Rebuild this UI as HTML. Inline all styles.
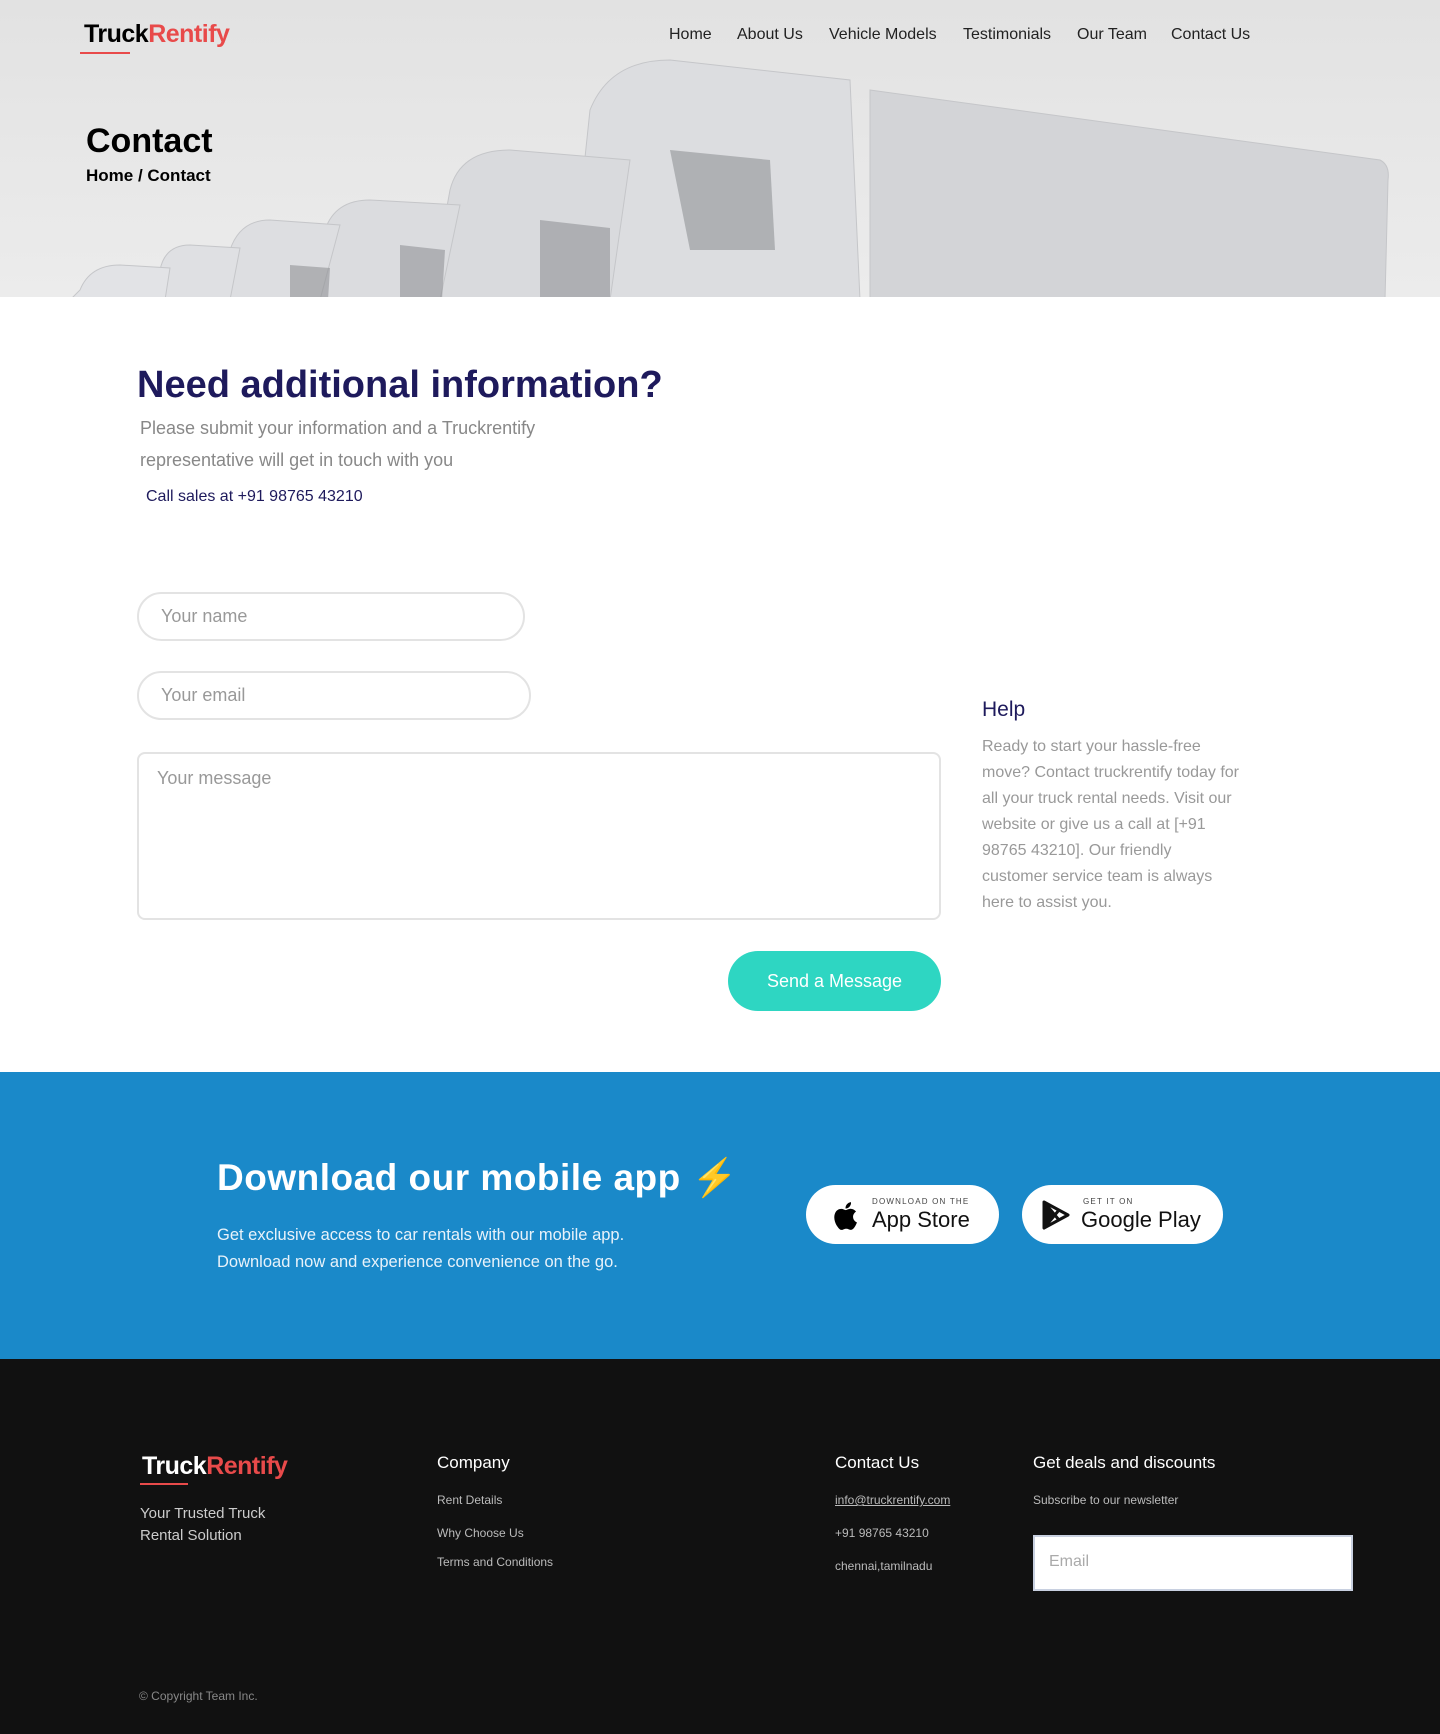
<!DOCTYPE html>
<html><head><meta charset="utf-8"><style>
*{margin:0;padding:0;box-sizing:border-box}
body{width:1440px;height:1734px;position:relative;font-family:"Liberation Sans",sans-serif;background:#fff;overflow:hidden}
.a{position:absolute}
.hero{left:0;top:0;width:1440px;height:297px;background:linear-gradient(180deg,#e2e2e2,#ececec);overflow:hidden}
.nav{top:26px;font-size:16px;color:#222}
.logo{font-weight:bold;font-size:25px;letter-spacing:-0.5px}
.logo span{color:#e84a4a}
.inp{border:2px solid #e3e3e3;border-radius:26px;color:#999;font-size:18px;padding-left:22px;display:flex;align-items:center}
.fl{font-size:12px;color:#bbb}
</style></head><body>
<div class="a hero">
<svg class="a" style="left:70px;top:50px" width="1330" height="250" viewBox="0 0 1330 250">
<g stroke="#c5c6c9">
<path d="M800 40 L1310 110 Q1320 115 1318 130 L1315 250 L800 250 Z" fill="#d3d4d7"/>
<path d="M520 60 Q540 10 600 10 L780 30 L790 250 L500 250 Z" fill="#dcdde0"/>
<path d="M380 140 Q390 100 440 100 L560 110 L540 250 L360 250 Z" fill="#d9dadd"/>
<path d="M255 180 Q265 150 300 150 L390 155 L370 250 L240 250 Z" fill="#dbdcdf"/>
<path d="M160 200 Q170 170 200 170 L270 175 L250 250 L150 250 Z" fill="#dddee1"/>
<path d="M90 220 Q95 195 120 195 L170 198 L160 250 L80 250 Z" fill="#dfe0e3"/>
<path d="M10 240 Q20 215 50 215 L100 218 L95 250 L0 250 Z" fill="#e2e3e6"/>
</g>
<g fill="#8b8c90" opacity=".55">
<path d="M600 100 L700 110 L705 200 L620 200 Z"/><path d="M470 170 L540 178 L540 250 L470 250 Z"/>
<path d="M330 195 L375 200 L372 250 L330 250 Z"/><path d="M220 215 L260 218 L258 250 L220 250 Z"/>
</g></svg>
<div class="a logo" style="left:84px;top:20px">Truck<span>Rentify</span></div>
<div class="a" style="left:80px;top:52px;width:50px;height:2px;background:#e84a4a"></div>
<div class="a nav" style="left:669px">Home</div>
<div class="a nav" style="left:737px">About Us</div>
<div class="a nav" style="left:829px">Vehicle Models</div>
<div class="a nav" style="left:963px">Testimonials</div>
<div class="a nav" style="left:1077px">Our Team</div>
<div class="a nav" style="left:1171px">Contact Us</div>
<div class="a" style="left:86px;top:122px;font-size:34px;font-weight:bold;color:#000">Contact</div>
<div class="a" style="left:86px;top:166px;font-size:17px;font-weight:bold;color:#000">Home / Contact</div>
</div>
<div class="a" style="left:137px;top:364px;font-size:38px;font-weight:bold;color:#1e1a5c">Need additional information?</div>
<div class="a" style="left:140px;top:412px;font-size:18px;line-height:32px;color:#888">Please submit your information and a Truckrentify<br>representative will get in touch with you</div>
<div class="a" style="left:146px;top:488px;font-size:16px;color:#1e1a5c">Call sales at +91 98765 43210</div>
<div class="a inp" style="left:137px;top:592px;width:388px;height:49px">Your name</div>
<div class="a inp" style="left:137px;top:671px;width:394px;height:49px">Your email</div>
<div class="a inp" style="left:137px;top:752px;width:804px;height:168px;border-radius:8px;align-items:flex-start;padding-top:14px;padding-left:18px">Your message</div>
<div class="a" style="left:728px;top:951px;width:213px;height:60px;border-radius:30px;background:#2ed6c2;color:#fff;font-size:18px;display:flex;align-items:center;justify-content:center">Send a Message</div>
<div class="a" style="left:982px;top:698px;font-size:21px;color:#1e1a5c">Help</div>
<div class="a" style="left:982px;top:734px;width:258px;font-size:16px;line-height:26px;color:#999">Ready to start your hassle-free move? Contact truckrentify today for all your truck rental needs. Visit our website or give us a call at [+91 98765 43210]. Our friendly customer service team is always here to assist you.</div>
<div class="a" style="left:0;top:1072px;width:1440px;height:287px;background:#1a89c9"></div>
<div class="a" style="left:217px;top:1157px;font-size:37px;font-weight:bold;color:#fff;letter-spacing:0.5px">Download our mobile app <span style="color:#f5c518">⚡</span></div>
<div class="a" style="left:217px;top:1222px;font-size:16.5px;line-height:27px;color:#e8f2fa">Get exclusive access to car rentals with our mobile app.<br>Download now and experience convenience on the go.</div>
<div class="a" style="left:806px;top:1185px;width:193px;height:59px;border-radius:30px;background:#fff">
<svg class="a" style="left:26px;top:16px" width="26" height="30" viewBox="0 0 24 28"><path d="M19.5 14.8c0-3.3 2.7-4.8 2.8-4.9-1.5-2.2-3.9-2.5-4.7-2.6-2-.2-3.9 1.2-4.9 1.2s-2.6-1.2-4.3-1.1C6.2 7.4 4.2 8.7 3.1 10.6c-2.3 4-.6 9.9 1.7 13.1 1.1 1.6 2.4 3.4 4.1 3.3 1.6-.1 2.3-1.1 4.3-1.1s2.5 1.1 4.3 1 2.9-1.6 3.9-3.2c1.2-1.8 1.7-3.6 1.8-3.7-.1 0-3.6-1.4-3.7-5.2zM16.3 5.2c.9-1.1 1.5-2.6 1.3-4.2-1.3.1-2.9.9-3.8 2-.8.9-1.5 2.5-1.3 4 1.4.1 2.9-.7 3.8-1.8z"/></svg>
<div class="a" style="left:66px;top:12px;font-size:8px;letter-spacing:1.2px;color:#444">DOWNLOAD ON THE</div>
<div class="a" style="left:66px;top:22px;font-size:22px;color:#111">App Store</div></div>
<div class="a" style="left:1022px;top:1185px;width:201px;height:59px;border-radius:30px;background:#fff">
<svg class="a" style="left:20px;top:15px" width="28" height="30" viewBox="0 0 28 30"><path d="M2 2 L26 15 L2 28 Z M2 2 L17 20 M2 28 L17 10" fill="none" stroke="#111" stroke-width="3" stroke-linejoin="round"/><path d="M2 2 L14 15 L2 28Z" fill="#111"/></svg>
<div class="a" style="left:61px;top:12px;font-size:8px;letter-spacing:1.2px;color:#444">GET IT ON</div>
<div class="a" style="left:59px;top:22px;font-size:22px;color:#111">Google Play</div></div>
<div class="a" style="left:0;top:1359px;width:1440px;height:375px;background:#111"></div>
<div class="a logo" style="left:142px;top:1452px;color:#fff">Truck<span>Rentify</span></div>
<div class="a" style="left:140px;top:1483px;width:48px;height:2px;background:#e84a4a"></div>
<div class="a" style="left:140px;top:1503px;font-size:15px;line-height:22px;color:#ccc">Your Trusted Truck<br>Rental Solution</div>
<div class="a" style="left:437px;top:1453px;font-size:17px;color:#fff">Company</div>
<div class="a fl" style="left:437px;top:1493px">Rent Details</div>
<div class="a fl" style="left:437px;top:1526px">Why Choose Us</div>
<div class="a fl" style="left:437px;top:1555px">Terms and Conditions</div>
<div class="a" style="left:835px;top:1453px;font-size:17px;color:#fff">Contact Us</div>
<div class="a fl" style="left:835px;top:1493px;text-decoration:underline">info@truckrentify.com</div>
<div class="a fl" style="left:835px;top:1526px">+91 98765 43210</div>
<div class="a fl" style="left:835px;top:1559px">chennai,tamilnadu</div>
<div class="a" style="left:1033px;top:1453px;font-size:17px;color:#fff">Get deals and discounts</div>
<div class="a fl" style="left:1033px;top:1493px">Subscribe to our newsletter</div>
<div class="a" style="left:1033px;top:1535px;width:320px;height:56px;background:#fff;border:2px solid #c8d0e0;color:#aaa;font-size:16px;padding:16px 14px">Email</div>
<div class="a" style="left:139px;top:1689px;font-size:12px;color:#888">© Copyright Team Inc.</div>
</body></html>
